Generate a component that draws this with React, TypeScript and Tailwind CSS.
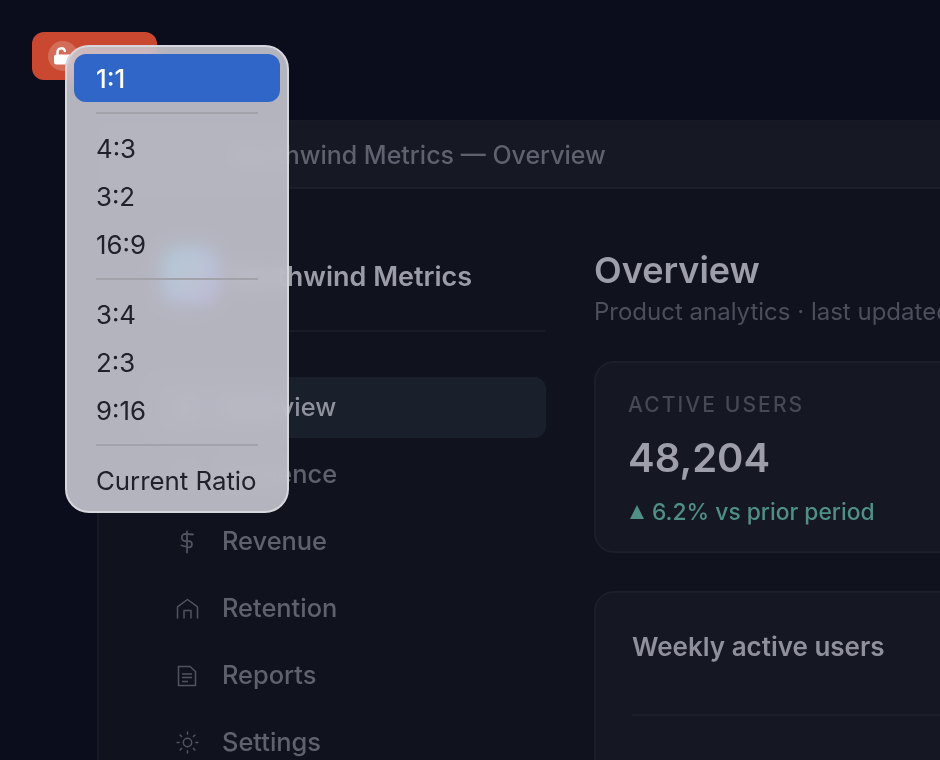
import { Activity, LayoutDashboard, Sun } from 'lucide-react';

const navItems = ['Audience', 'Revenue', 'Retention', 'Reports', 'Settings'];

function NavIcon({ name }: { name: string }) {
  if (name === 'Audience') return <Activity size={22} strokeWidth={1.5} />;
  if (name === 'Settings') return <Sun size={25} strokeWidth={1.4} />;
  if (name === 'Revenue') {
    return (
      <svg width="18" height="24" viewBox="0 0 18 24" fill="none" stroke="currentColor" strokeWidth="1.8" strokeLinecap="round" strokeLinejoin="round">
        <path d="M9 1.5v21" />
        <path d="M15 4.5 7.5 3.8a3.7 3.7 0 0 0 0 7.4h3.5a3.2 3.2 0 0 1 .5 6.3L3.5 15.5" />
      </svg>
    );
  }
  if (name === 'Retention') {
    return (
      <svg width="23" height="21" viewBox="0 0 23 21" fill="none" stroke="currentColor" strokeWidth="1.5" strokeLinejoin="round" strokeLinecap="round">
        <path d="M1.5 20V9.5a1.5 1.5 0 0 1 .6-1.2L11.5 1.5l9.4 6.8a1.5 1.5 0 0 1 .6 1.2V20" />
        <path d="M8 20v-7.5h7V20" />
      </svg>
    );
  }
  return (
    <svg width="20" height="22" viewBox="0 0 20 22" fill="none" stroke="currentColor" strokeWidth="1.5">
      <path d="M1.5 1.5h11.5l5.5 5v14h-17z" />
      <path d="M5 9h10M5 12.5h10M5 16.5h6" />
    </svg>
  );
}

function OpenLock() {
  return (
    <svg width="20" height="20" viewBox="0 0 20 20" fill="none">
      <path d="M4.5 9V6a3.8 3.8 0 0 1 7.4-1.1" stroke="white" strokeWidth="2.4" strokeLinecap="round" />
      <rect x="1" y="8.5" width="18" height="10" rx="2.5" fill="white" />
    </svg>
  );
}

function Separator() {
  return (
    <div className="flex h-[22px] items-center px-[22px]">
      <div className="h-[2px] w-full bg-[#a2a2ab]" />
    </div>
  );
}

function RatioItem({ label }: { label: string }) {
  return <div className="flex h-[48px] items-center whitespace-nowrap pl-[22px] pt-[3px] text-[#20212a]">{label}</div>;
}

export default function App() {
  return (
    <div className="relative h-[760px] w-[940px] overflow-hidden bg-[#0c0d1c] font-['Inter',sans-serif]">
      <div className="absolute left-[32px] top-[32px] flex h-[48px] w-[125px] items-center rounded-[12px] bg-[#c9482f] pl-[16px]">
        <div className="flex h-[30px] w-[30px] items-center justify-center rounded-full bg-white/20">
          <OpenLock />
        </div>
      </div>

      {/* dimmed app window */}
      <div className="absolute left-[97px] top-[120px] h-[760px] w-[1100px] rounded-tl-[12px] border-l-2 border-t-2 border-[#171925] bg-[#10121e]">
        <div className="flex h-[67px] items-center border-b-2 border-[#1c1e2b] bg-[#161824] pl-[133px] pt-[3px] text-[25px] font-medium text-[#5f616e]">
          Northwind Metrics — Overview
        </div>
        <div className="flex">
          <aside className="w-[495px] shrink-0 pl-[51px] pr-[48px] pt-[42px]">
            <div className="flex h-[101px] items-start gap-[11px] border-b-2 border-[#191b27] pl-[12px] pt-[16px]">
              <div className="h-[56px] w-[56px] shrink-0 rounded-[16px] bg-gradient-to-br from-[#40d8e8] to-[#8a70ff]" />
              <div className="pt-[10px] text-[27px] font-semibold text-[#9b9ca6]">Northwind Metrics</div>
            </div>
            <nav className="mt-[45px] flex flex-col gap-[6px]">
              <div className="flex h-[61px] items-center gap-[24px] rounded-[12px] bg-[#1a1f2c] pl-[25px] text-[25.4px] font-medium text-[#8f919c]">
                <LayoutDashboard size={22} strokeWidth={1.5} className="shrink-0" />
                Overview
              </div>
              {navItems.map((name) => (
                <div key={name} className="flex h-[61px] items-center text-[25.4px] font-medium text-[#5f616e]">
                  <div className="flex w-[72px] shrink-0 justify-center pl-[2px] text-[#515361]">
                    <NavIcon name={name} />
                  </div>
                  {name}
                </div>
              ))}
            </nav>
          </aside>

          <main className="min-w-0 flex-1 pt-[59px]">
            <h1 className="text-[36px] font-semibold leading-[44px] text-[#9d9ea9]">Overview</h1>
            <p className="mt-[4px] text-[24px] leading-[32px] text-[#4c4e5b]">Product analytics · last updated 2 min ago</p>
            <div className="mt-[33px] h-[192px] rounded-[20px] border-2 border-[#1c1e2b] bg-[#151723] pl-[32px] pt-[28px]">
              <div className="text-[21px] font-medium leading-[28px] tracking-[0.1em] text-[#464854]">ACTIVE USERS</div>
              <div className="mt-[14px] text-[40px] font-semibold leading-[50px] text-[#9d9ea9]">48,204</div>
              <div className="mt-[14px] flex items-center gap-[8px] pl-[2px] text-[22.8px] font-medium leading-[30px] text-[#4f8f86]">
                <span className="h-0 w-0 border-x-[7.5px] border-b-[14px] border-x-transparent border-b-[#4f8f86]" />
                6.2% vs prior period
              </div>
            </div>
            <div className="mt-[38px] h-[300px] rounded-t-[20px] border-2 border-[#1c1e2b] bg-[#151723] pl-[36px] pt-[36px]">
              <div className="text-[26px] font-semibold leading-[36px] text-[#8f909b]">Weekly active users</div>
              <div className="mt-[49px] h-[2px] bg-[#1c1e2b]" />
            </div>
          </main>
        </div>
      </div>

      {/* aspect ratio menu */}
      <div className="absolute left-[65px] top-[45px] w-[224px] rounded-[24px] border-2 border-[#d6d6dd] bg-[#c6c6cf]/90 p-[7px] text-[25.8px] backdrop-blur-[9px] backdrop-saturate-[1.8]">
        <div className="flex h-[48px] items-center rounded-[12px] bg-[#2f66c8] pl-[22px] pt-[3px] font-medium text-white">1:1</div>
        <Separator />
        <RatioItem label="4:3" />
        <RatioItem label="3:2" />
        <RatioItem label="16:9" />
        <Separator />
        <RatioItem label="3:4" />
        <RatioItem label="2:3" />
        <RatioItem label="9:16" />
        <Separator />
        <RatioItem label="Current Ratio" />
      </div>
    </div>
  );
}
